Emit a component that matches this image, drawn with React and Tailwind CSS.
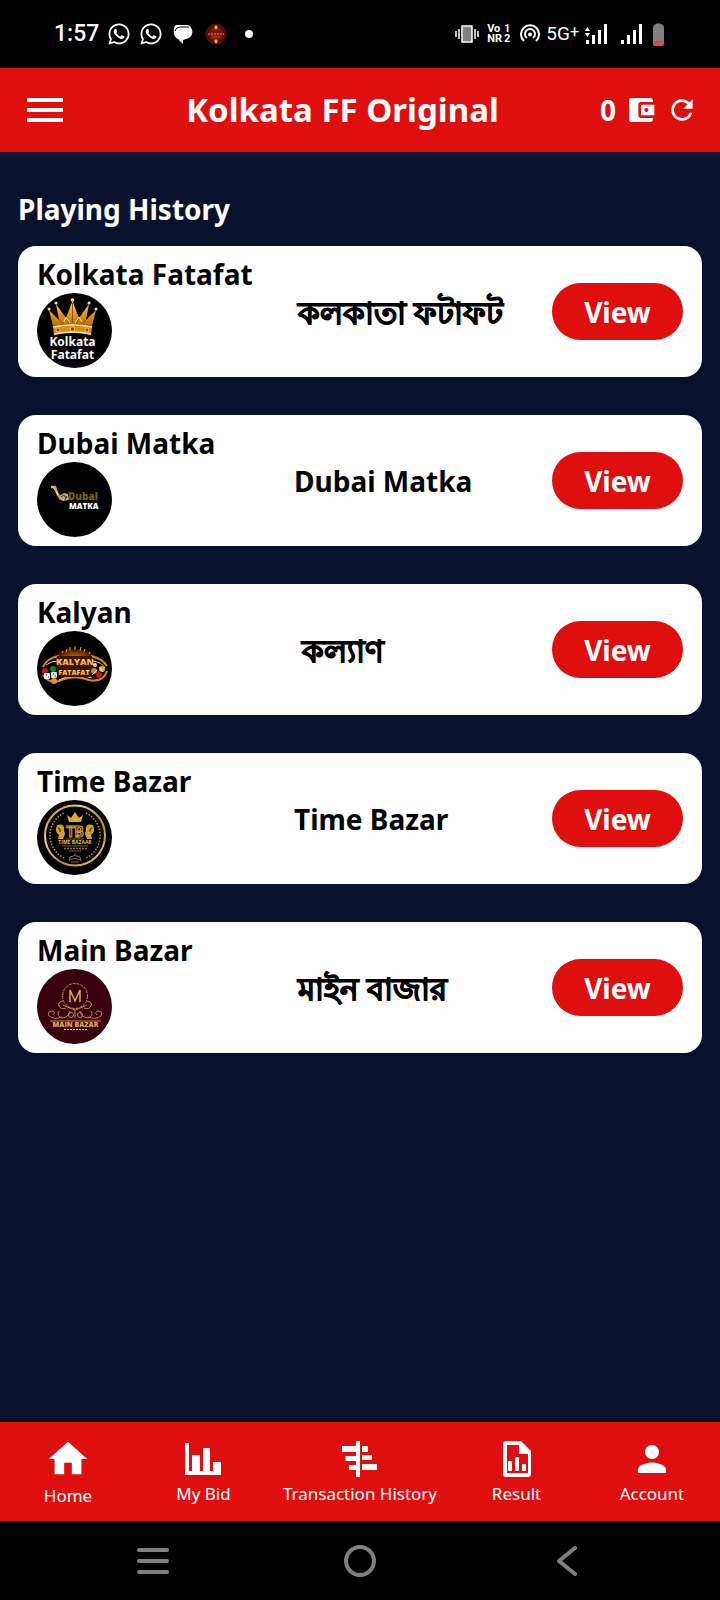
import React from "react";
import {
  MdAccountBalanceWallet,
  MdHome,
  MdMenu,
  MdPerson,
  MdRefresh,
} from "react-icons/md";
import { FaWhatsapp } from "react-icons/fa";

function KolkataLogo() {
  return (
    <svg viewBox="0 0 75 75" className="size-[75px]" aria-hidden="true">
      <defs>
        <linearGradient id="crown" x1="0" y1="0" x2="0" y2="1">
          <stop offset="0" stopColor="#ffd978" />
          <stop offset="0.5" stopColor="#e39a1c" />
          <stop offset="1" stopColor="#b56a08" />
        </linearGradient>
      </defs>
      <circle cx="37.5" cy="37.5" r="37.5" fill="#000" />
      <path
        d="M16 33 L12 17 L22 27 L19 11 L29 25 L35.500 8 L42 25 L52 11 L49 27 L59 17 L55 33 Q35.500 29 16 33Z"
        fill="url(#crown)"
      />
      <path d="M22 27l5 4M29 25l3 6M35.500 10v20M42 25l-3 6M49 27l-5 4" stroke="#8f5206" strokeWidth="1" />
      <path d="M27 29l2-5 4 6M38 30l4-6 3 5" stroke="#ffe69a" strokeWidth="1" fill="none" />
      <path d="M16 33Q35.500 29 55 33L54 42Q35.500 38 17 42Z" fill="#d98c14" />
      <path d="M16 34Q35.500 30 55 34M17 41Q35.500 37 54 41" stroke="#ffe08a" strokeWidth="1.500" fill="none" />
      <g fill="#ffe08a">
        <circle cx="12" cy="16" r="1.500" />
        <circle cx="19" cy="10" r="1.500" />
        <circle cx="35.500" cy="7" r="1.800" />
        <circle cx="52" cy="10" r="1.500" />
        <circle cx="59" cy="16" r="1.500" />
      </g>
      <g fill="#7a3f04" stroke="#ffd978" strokeWidth="0.800">
        <circle cx="21" cy="37" r="2" />
        <circle cx="35.500" cy="36" r="2.200" />
        <circle cx="50" cy="37" r="2" />
      </g>
      <g fill="#fff" fontFamily="Open Sans, sans-serif" fontWeight="700" fontSize="12" textAnchor="middle">
        <text x="35.500" y="53">Kolkata</text>
        <text x="35.500" y="66">Fatafat</text>
      </g>
    </svg>
  );
}

function DubaiLogo() {
  return (
    <svg viewBox="0 0 75 75" className="size-[75px]" aria-hidden="true">
      <circle cx="37.5" cy="37.5" r="37.5" fill="#000" />
      <path d="M14 25l4 0 2 6 3 5 4 1" stroke="#c9a930" strokeWidth="2.500" fill="none" />
      <path d="M15 24l3 4M19 29l2 4" stroke="#fff2b0" strokeWidth="1" />
      <path d="M22 34l5-3 4 1 1 6-6 1-4-2z" fill="#b8ac80" />
      <path d="M24 35l3-2 2 3M28 38l2-4" stroke="#3c3310" strokeWidth="1" fill="none" />
      <text x="31" y="38" fill="#75600f" fontFamily="Open Sans, sans-serif" fontWeight="800" fontSize="10">
        Dubai
      </text>
      <text x="32" y="47" fill="#fff" fontFamily="Open Sans, sans-serif" fontWeight="800" fontSize="8">
        MATKA
      </text>
    </svg>
  );
}

function KalyanLogo() {
  return (
    <svg viewBox="0 0 75 75" className="size-[75px]" aria-hidden="true">
      <defs>
        <linearGradient id="fire" x1="0" y1="0" x2="0" y2="1">
          <stop offset="0" stopColor="#fff0a0" />
          <stop offset="1" stopColor="#f08a10" />
        </linearGradient>
        <radialGradient id="glow">
          <stop offset="0" stopColor="#d06a08" />
          <stop offset="0.6" stopColor="#6b2c04" />
          <stop offset="1" stopColor="#000" />
        </radialGradient>
      </defs>
      <circle cx="37.5" cy="37.5" r="37.5" fill="#000" />
      <ellipse cx="38" cy="26" rx="23" ry="9" fill="url(#glow)" />
      <path d="M25 22l1-2M29 21l1-3M33 20v-4M38 19v-4M43 20l1-4M47 21l1-3M52 23l1-2" stroke="#f2a51c" strokeWidth="1" />
      <path d="M6 36Q10 27 22 25M54 25Q66 28 70 35M6 44Q12 53 22 50Q38 43 52 49Q66 52 70 40" stroke="#d98a16" strokeWidth="2" fill="none" />
      <path d="M9 34Q14 30 21 30M55 30Q65 31 68 37M22 49Q38 41 55 47" stroke="#ffc845" strokeWidth="1" fill="none" />
      <path d="M19 37l1-12 35 0 1 12-2 9H21z" fill="#391303" />
      <g fontFamily="Open Sans, sans-serif" fontWeight="800" textAnchor="middle" fill="url(#fire)">
        <text x="38" y="34" fontSize="9">KALYAN</text>
        <text x="37" y="44" fontSize="7">FATAFAT</text>
      </g>
      <circle cx="8" cy="40" r="3" fill="#b81a12" />
      <circle cx="16" cy="38" r="3" fill="#15803a" />
      <rect x="7" y="42" width="6" height="6" rx="1" fill="#eee" />
      <rect x="14" y="41" width="6" height="6" rx="1" fill="#ddd" />
      <path d="M9 44h1M11 46h1M16 43h1M18 45h1" stroke="#222" strokeWidth="1" />
      <circle cx="17" cy="50" r="3" fill="#d99a25" />
      <circle cx="57" cy="40" r="3" fill="#d9820f" />
      <circle cx="62" cy="44" r="3" fill="#c2161a" />
      <circle cx="65" cy="38" r="3" fill="#e8a82c" />
      <circle cx="58" cy="34" r="2" fill="#ddd" />
      <path d="M55 44l5-5M62 36l4 5" stroke="#fff1b8" strokeWidth="1" />
    </svg>
  );
}

function TimeLogo() {
  return (
    <svg viewBox="0 0 75 75" className="size-[75px]" aria-hidden="true">
      <defs>
        <linearGradient id="ring" x1="0" y1="0" x2="1" y2="1">
          <stop offset="0" stopColor="#a9781c" />
          <stop offset="0.3" stopColor="#f5d57a" />
          <stop offset="0.6" stopColor="#c08a22" />
          <stop offset="1" stopColor="#f0cb66" />
        </linearGradient>
      </defs>
      <circle cx="37.5" cy="37.5" r="37.5" fill="#000" />
      <circle cx="38" cy="35.500" r="30" fill="none" stroke="url(#ring)" strokeWidth="2" />
      <path d="M27 58A25 25 0 0 1 27 13M49 13A25 25 0 0 1 49 58" fill="none" stroke="#b99a4c" strokeWidth="1.500" strokeDasharray="1.500 1.500" />
      <path d="M32 22l-2-7 4 3 4-6 4 6 4-3-2 7z" fill="#e0ac34" />
      <path d="M20 25q8-2 7 5l1 4-2 5h-5l1-4q-5-3-2-10zM56 25q-8-2-7 5l-1 4 2 5h5l-1-4q5-3 2-10z" fill="#d39d32" />
      <path d="M21 28q3 0 2 4M55 28q-3 0-2 4" stroke="#2c1d00" strokeWidth="1" fill="none" />
      <text x="38" y="37" textAnchor="middle" fontFamily="Roboto, sans-serif" fontWeight="700" fontSize="14" fill="#160e00" stroke="#d8a741" strokeWidth="1">
        TB
      </text>
      <path d="M29 39h18M25 46h26M32 51h12" stroke="#b58b35" strokeWidth="0.700" />
      <text x="38" y="44" textAnchor="middle" fontFamily="Open Sans, sans-serif" fontWeight="700" fontSize="5" fill="#e5b95a">
        TIME BAZAAR
      </text>
      <path d="M27 48.500h23" stroke="#8a682a" strokeWidth="1.500" strokeDasharray="2 1" />
      <path d="M38 53v3M33 57q5-3 10 0M32 60q6-3 12 0M34 62h8M33 57l-1 4M43 57l1 4" stroke="#86682f" strokeWidth="1" fill="none" />
    </svg>
  );
}

function MainLogo() {
  return (
    <svg viewBox="0 0 75 75" className="size-[75px]" aria-hidden="true">
      <circle cx="37.5" cy="37.5" r="37.5" fill="#38000f" />
      <g fill="none" stroke="#c48a4a" strokeWidth="1">
        <circle cx="38" cy="27" r="12.500" strokeDasharray="3 1" />
        <path d="M26 32q-6 1-4 5q2 4 7 2M50 32q6 1 4 5q-2 4-7 2M26 36q6 3 12 5q6-2 12-5" />
        <path d="M22 42q-3 5 3 7q6 0 8-7M54 42q3 5-3 7q-6 0-8-7M38 41v8" />
        <path d="M25 48q-8 3-13-1q-2-5 3-5q4 1 1 4M51 48q8 3 13-1q2-5-3-5q-4 1-1 4" />
        <circle cx="34" cy="46" r="2.500" />
        <circle cx="43" cy="46" r="2.500" />
        <path d="M13 52h51" />
      </g>
      <path d="M33 33V21l5 11 5-11v12" fill="none" stroke="#dca55c" strokeWidth="1.500" />
      <text x="38.500" y="58" textAnchor="middle" fontFamily="Open Sans, sans-serif" fontWeight="800" fontSize="7" fill="#e0a65d">
        MAIN BAZAR
      </text>
      <path d="M27 60.500h24" stroke="#d8b9a0" strokeWidth="1" strokeDasharray="2 1" />
    </svg>
  );
}

function MyBidIcon() {
  return (
    <svg viewBox="0 0 36 32" className="h-8 w-9" fill="currentColor" aria-hidden="true">
      <path d="M0 0h4v28h3V12h8v16h3V5h7v23h3v-9h8v13H0z" />
    </svg>
  );
}

function TransactionIcon() {
  return (
    <svg viewBox="0 0 36 36" className="size-9" fill="currentColor" aria-hidden="true">
      <path d="M14 0h4v36h-4v-7H7v-5h7v-4H3.500v-5H14v-4H0V5h14zM20 5h6v6h-6zM20 14h10v5H20zM20 23h15v6H20z" />
    </svg>
  );
}

function ResultIcon() {
  return (
    <svg viewBox="0 0 28 36" className="h-9 w-7" fill="currentColor" aria-hidden="true">
      <path
        fillRule="evenodd"
        d="M3 0h15l10 10v23a3 3 0 0 1-3 3H3a3 3 0 0 1-3-3V3a3 3 0 0 1 3-3zm1 4v28h21V13h-9V4z"
      />
      <path d="M5 20h4v10H5zM12 16h4v14h-4zM19 23h4v7h-4z" />
    </svg>
  );
}

function StatusBar() {
  return (
    <div className="flex h-[68px] items-center justify-between bg-black pl-[54px] pr-14 text-white">
      <div className="flex items-center">
        <span className="font-[Roboto] text-[23px] font-medium leading-6">1:57</span>
        <div className="ml-2 flex items-center gap-2">
          <FaWhatsapp className="size-6" />
          <FaWhatsapp className="size-6" />
        </div>
        <svg viewBox="0 0 20 20" className="ml-2.5 size-5" aria-hidden="true">
          <path d="M3 1h11q3 0 4 3q2 2 1 6q-1 4-6 5l-3 1v4l-5-5q-4-2-4-6q-1-6 2-8z" fill="#fff" />
          <path d="M2 7q1-4 5-4h9" stroke="#000" strokeWidth="1" fill="none" />
        </svg>
        <svg viewBox="0 0 22 22" className="ml-3 size-[22px]" aria-hidden="true">
          <circle cx="11" cy="11" r="10.500" fill="#4f0f08" />
          <circle cx="11" cy="11" r="7" fill="#7d1a0d" />
          <path d="M3 11h16" stroke="#d0402a" strokeWidth="2" strokeDasharray="2 1" />
          <path d="M7 14h8" stroke="#a8571f" strokeWidth="1" />
          <path d="M11 2l2 2-2 3-2-3zM11 16l2 2-2 3-2-3z" fill="#e0a545" />
        </svg>
        <span className="ml-[18px] size-2 rounded-full bg-white" />
      </div>

      <div className="flex items-center">
        <svg viewBox="0 0 24 20" className="h-5 w-6" aria-hidden="true">
          <rect x="7" y="2" width="10" height="16" fill="#808080" stroke="#fff" strokeWidth="1.500" />
          <path d="M1 7v6M4 5v10M20 5v10M23 7v6" stroke="#fff" strokeWidth="1.500" />
        </svg>
        <div className="ml-2 grid grid-cols-[auto_auto] gap-x-0.5 font-[Roboto] text-[11px] font-bold leading-[10px]">
          <span>Vo</span>
          <span className="text-right">1</span>
          <span>NR</span>
          <span>2</span>
        </div>
        <svg viewBox="0 0 20 20" className="ml-2.5 size-5" fill="none" stroke="#fff" strokeWidth="2" aria-hidden="true">
          <path d="M4 17A9 9 0 1 1 16 17" />
          <path d="M7 14A5 5 0 1 1 13 14" />
          <circle cx="10" cy="10.500" r="2" fill="#fff" stroke="none" />
        </svg>
        <span className="ml-1.5 font-[Roboto] text-[19px] leading-5">
          5G<span className="align-[3px] text-base leading-none">+</span>
        </span>
        <svg viewBox="0 0 22 20" className="ml-1.5 h-5 w-[22px]" fill="#fff" aria-hidden="true">
          <path d="M0 7l2.500-4L5 7zM0 9h5l-2.500 4zM1 16h3v4H1zM7 11h3v9H7zM13 6h3v14h-3zM19 0h3v20h-3z" />
        </svg>
        <svg viewBox="0 0 22 20" className="ml-3.5 h-5 w-[22px]" fill="#fff" aria-hidden="true">
          <path d="M0 16h3v4H0zM6 11h3v9H6zM12 6h3v14h-3zM18 0h3v20h-3z" />
        </svg>
        <svg viewBox="0 0 11 23" className="ml-2.5 h-[23px] w-[11px]" aria-hidden="true">
          <path d="M3 1q2.500-1.500 5 0q3 1 3 4v13H0V5q0-3 3-4z" fill="#808080" />
          <path d="M0 18h11v3q0 2-2 2H2q-2 0-2-2z" fill="#df4a48" />
        </svg>
      </div>
    </div>
  );
}

// Bengali falls back to a lighter face, so it is set larger with a thin stroke
const games = [
  { name: "Kolkata Fatafat", label: "কলকাতা ফটাফট", Logo: KolkataLogo, labelClass: "pl-1 text-[31px] [-webkit-text-stroke:1px_black]" },
  { name: "Dubai Matka", label: "Dubai Matka", Logo: DubaiLogo },
  { name: "Kalyan", label: "কল্যাণ", Logo: KalyanLogo, labelClass: "pl-2 text-[31px] [-webkit-text-stroke:1px_black]" },
  { name: "Time Bazar", label: "Time Bazar", Logo: TimeLogo },
  { name: "Main Bazar", label: "মাইন বাজার", Logo: MainLogo, labelClass: "pl-1 text-[31px] [-webkit-text-stroke:1px_black]" },
];

function GameCard({ name, label, Logo, labelClass }) {
  return (
    <li className="grid h-[131px] grid-cols-[257px_1fr_131px] items-center rounded-[18px] bg-white px-[19px] text-[28px] font-bold leading-9 text-black">
      <div>
        <h2 className="whitespace-nowrap">{name}</h2>
        <div className="mt-px">
          <Logo />
        </div>
      </div>
      <p className={labelClass}>{label}</p>
      <button className="h-[57px] rounded-full bg-[#df0f0f] text-white">View</button>
    </li>
  );
}

function NavItem({ label, iconClass = "h-[46px] items-center", children }) {
  return (
    <a href="#" className="flex min-w-28 flex-col items-center text-[17px] leading-6">
      <span className={`flex ${iconClass}`}>{children}</span>
      {label}
    </a>
  );
}

function App() {
  return (
    <div className="flex min-h-screen flex-col bg-[#09122d] font-['Noto_Sans',sans-serif] text-white">
      <StatusBar />

      <header className="flex h-21 items-center justify-between bg-[#df0f0f] pl-[21px] pr-[22px]">
        <button aria-label="Menu">
          <MdMenu className="size-12" />
        </button>
        <h1 className="pl-4 text-[33px] font-bold">Kolkata FF Original</h1>
        <div className="flex items-center gap-[9px]">
          <span className="text-[28px] font-bold">0</span>
          <MdAccountBalanceWallet className="size-8" />
          <button aria-label="Refresh">
            <MdRefresh className="size-8" />
          </button>
        </div>
      </header>
      <div className="h-2 bg-linear-to-b from-[#111c3b] to-[#09122d]" />

      <main className="flex-1 px-[18px] pt-[31px]">
        <h2 className="text-[28px] font-bold leading-9">Playing History</h2>
        <ul className="mt-[19px] space-y-[38px]">
          {games.map((game) => (
            <GameCard key={game.name} {...game} />
          ))}
        </ul>
      </main>

      {/* Bottom tabs */}
      <nav className="flex h-[101px] justify-between border-t-2 border-black bg-[#df0f0f] px-3 pt-3.5">
        <NavItem label="Home" iconClass="h-12 items-start">
          <MdHome className="size-[46px]" />
        </NavItem>
        <NavItem label="My Bid">
          <MyBidIcon />
        </NavItem>
        <NavItem label="Transaction History">
          <TransactionIcon />
        </NavItem>
        <NavItem label="Result">
          <ResultIcon />
        </NavItem>
        <NavItem label="Account">
          <MdPerson className="size-[42px]" />
        </NavItem>
      </nav>

      {/* Phone navigation */}
      <div className="flex h-[79px] items-center justify-between bg-black px-[137px]">
        <button aria-label="Recent apps">
          <svg viewBox="0 0 32 26" className="h-[26px] w-8" stroke="#808080" strokeWidth="4" strokeLinecap="round">
            <path d="M2 2h28M2 13h28M2 24h28" />
          </svg>
        </button>
        <button aria-label="Home screen">
          <svg viewBox="0 0 32 32" className="size-8" fill="none" stroke="#808080" strokeWidth="4">
            <circle cx="16" cy="16" r="14" />
          </svg>
        </button>
        <button aria-label="Back" className="flex w-8 justify-center">
          <svg viewBox="0 0 20 30" className="h-[30px] w-5" fill="none" stroke="#808080" strokeWidth="4" strokeLinecap="round" strokeLinejoin="round">
            <path d="M18 2L2 15l16 13" />
          </svg>
        </button>
      </div>
    </div>
  );
}

export default App;
